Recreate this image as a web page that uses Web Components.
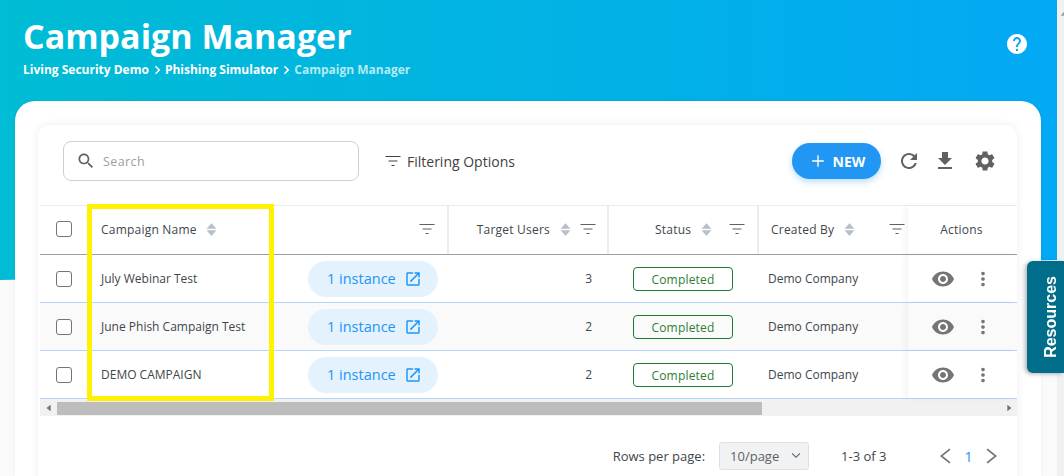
<!DOCTYPE html>
<html lang="en">
<head>
<meta charset="utf-8">
<title>Campaign Manager</title>
<style>
  html, body { margin: 0; height: 100%; overflow: hidden; background: #fafafa; }
  body { font-family: "Open Sans", "Noto Sans", sans-serif; color: #37474f; }
</style>
</head>
<body>
<campaign-page></campaign-page>
<script>
const ICONS = {
  search: '<path d="M15.5 14h-.79l-.28-.27C15.41 12.59 16 11.11 16 9.5 16 5.91 13.09 3 9.5 3S3 5.91 3 9.5 5.91 16 9.5 16c1.61 0 3.09-.59 4.23-1.57l.27.28v.79l5 4.99L20.49 19l-4.99-5zm-6 0C7.01 14 5 11.99 5 9.5S7.01 5 9.5 5 14 7.01 14 9.5 11.99 14 9.5 14z"/>',
  filter: '<path d="M2 5.2h20v1.5H2zM6 11.2h12v1.5H6zM10 17.2h4v1.5h-4z"/>',
  open: '<path d="M19 19H5V5h7V3H5c-1.11 0-2 .9-2 2v14c0 1.1.89 2 2 2h14c1.1 0 2-.9 2-2v-7h-2v7zM14 3v2h3.59l-9.83 9.83 1.41 1.41L19 6.41V10h2V3h-7z"/>',
  refresh: '<path d="M17.65 6.35C16.2 4.9 14.21 4 12 4c-4.42 0-7.99 3.58-7.99 8s3.57 8 7.99 8c3.73 0 6.84-2.55 7.73-6h-2.08c-.82 2.33-3.04 4-5.65 4-3.31 0-6-2.69-6-6s2.69-6 6-6c1.66 0 3.14.69 4.22 1.78L13 11h7V4l-2.35 2.35z"/>',
  download: '<path d="M19 9h-4V3H9v6H5l7 7 7-7zM5 18v2h14v-2H5z"/>',
  settings: '<path d="M19.14 12.94c.04-.3.06-.61.06-.94 0-.32-.02-.64-.07-.94l2.03-1.58c.18-.14.23-.41.12-.61l-1.92-3.32c-.12-.22-.37-.29-.59-.22l-2.39.96c-.5-.38-1.03-.7-1.62-.94l-.36-2.54c-.04-.24-.24-.41-.48-.41h-3.84c-.24 0-.43.17-.47.41l-.36 2.54c-.59.24-1.13.57-1.62.94l-2.39-.96c-.22-.08-.47 0-.59.22L2.74 8.87c-.12.21-.08.47.12.61l2.03 1.58c-.05.3-.09.63-.09.94s.02.64.07.94l-2.03 1.58c-.18.14-.23.41-.12.61l1.92 3.32c.12.22.37.29.59.22l2.39-.96c.5.38 1.03.7 1.62.94l.36 2.54c.05.24.24.41.48.41h3.84c.24 0 .44-.17.47-.41l.36-2.54c.59-.24 1.13-.56 1.62-.94l2.39.96c.22.08.47 0 .59-.22l1.92-3.32c.12-.22.07-.47-.12-.61l-2.01-1.58zM12 15.6c-1.98 0-3.6-1.62-3.6-3.6s1.62-3.6 3.6-3.6 3.6 1.62 3.6 3.6-1.62 3.6-3.6 3.6z"/>',
  help: '<path d="M12 2C6.48 2 2 6.48 2 12s4.48 10 10 10 10-4.48 10-10S17.52 2 12 2zm1 17h-2v-2h2v2zm2.07-7.75l-.9.92C13.45 12.9 13 13.5 13 15h-2v-.5c0-1.1.45-2.1 1.17-2.83l1.24-1.26c.37-.36.59-.86.59-1.41 0-1.1-.9-2-2-2s-2 .9-2 2H8c0-2.21 1.79-4 4-4s4 1.79 4 4c0 .88-.36 1.68-.93 2.25z"/>',
  eye: '<path d="M12 4.5C7 4.5 2.73 7.61 1 12c1.73 4.39 6 7.5 11 7.5s9.27-3.11 11-7.5c-1.73-4.39-6-7.5-11-7.5zM12 17c-2.76 0-5-2.24-5-5s2.24-5 5-5 5 2.24 5 5-2.24 5-5 5zm0-8c-1.66 0-3 1.34-3 3s1.34 3 3 3 3-1.34 3-3-1.34-3-3-3z"/>',
  more: '<path d="M12 8c1.1 0 2-.9 2-2s-.9-2-2-2-2 .9-2 2 .9 2 2 2zm0 2c-1.1 0-2 .9-2 2s.9 2 2 2 2-.9 2-2-.9-2-2-2zm0 6c-1.1 0-2 .9-2 2s.9 2 2 2 2-.9 2-2-.9-2-2-2z"/>',
  add: '<path d="M19 12.8h-6.2V19h-1.6v-6.2H5v-1.6h6.2V5h1.6v6.2H19z"/>',
  sort: '<path d="M12 3l7 8H5zM12 21l-7-8h14z"/>',
  crumb: '<path d="M7 4.2L9.6 1.6 20 12 9.6 22.4 7 19.8 14.8 12z"/>',
  prev: '<path d="M16.5 2L18 3.6 7.6 12 18 20.4 16.5 22 4 12z"/>',
  next: '<path d="M7.5 2L6 3.6 16.4 12 6 20.4 7.5 22 20 12z"/>',
  down: '<path d="M5.5 8.5l1.1-1.1L12 12.8l5.4-5.4 1.1 1.1L12 15z"/>',
  left: '<path d="M16 4v16L6 12z"/>',
  right: '<path d="M8 4v16l10-8z"/>',
  up: '<path d="M4 16h16L12 6z"/>'
};

class AppIcon extends HTMLElement {
  connectedCallback() {
    const size = this.getAttribute('size') || 24;
    const root = this.shadowRoot || this.attachShadow({ mode: 'open' });
    root.innerHTML = `
      <style>
        :host { display: inline-flex; flex: none; width: ${size}px; height: ${size}px; }
        svg { width: 100%; height: 100%; fill: currentColor; display: block; }
      </style>
      <svg viewBox="0 0 24 24" aria-hidden="true">${ICONS[this.getAttribute('name')] || ''}</svg>`;
  }
}
customElements.define('app-icon', AppIcon);

class PageHero extends HTMLElement {
  constructor() {
    super();
    this.attachShadow({ mode: 'open' });
    this.shadowRoot.innerHTML = `
      <style>
        :host {
          display: flex;
          justify-content: space-between;
          height: 280px;
          box-sizing: border-box;
          padding: 14px 28px 0 23px;
          color: #fff;
          background: linear-gradient(90deg, #00bcd4 0%, #03a9f4 100%);
          clip-path: polygon(0 0, 100% 0, 100% 260px, 0 280px);
        }
        h1 { margin: 0; font-size: 34px; line-height: 44px; font-weight: 700; }
        .crumbs { display: flex; align-items: center; margin-top: 3px; font-size: 12px; line-height: 18px; font-weight: 700; }
        .crumbs app-icon { margin: 0 3px; }
        .current { color: #b2ebf2; }
        .help { margin-top: 18px; }
      </style>
      <div>
        <h1>Campaign Manager</h1>
        <div class="crumbs">
          <span>Living Security Demo</span><app-icon name="crumb" size="10"></app-icon>
          <span>Phishing Simulator</span><app-icon name="crumb" size="10"></app-icon>
          <span class="current">Campaign Manager</span>
        </div>
      </div>
      <app-icon class="help" name="help" size="24"></app-icon>`;
  }
}
customElements.define('page-hero', PageHero);

class TableToolbar extends HTMLElement {
  constructor() {
    super();
    this.attachShadow({ mode: 'open' });
    this.shadowRoot.innerHTML = `
      <style>
        :host { display: flex; align-items: center; box-sizing: border-box; height: 80px; padding: 0 20px 8px 25px; color: #616161; }
        .search {
          box-sizing: border-box; width: 296px; height: 40px; display: flex; align-items: center; gap: 7px;
          padding-left: 12px; border: 1px solid #cfcfcf; border-radius: 8px; font-size: 12.5px; color: #9e9e9e;
          letter-spacing: .4px;
        }
        .search app-icon { color: #616161; }
        .filter { display: flex; align-items: center; gap: 5px; margin-left: 25px; font-size: 14px; color: #424242; }
        .new {
          box-sizing: border-box; width: 89px; height: 36px; margin-left: auto; display: flex; align-items: center; justify-content: center; gap: 5px;
          border-radius: 18px; background: #2196f3; color: #fff; font-size: 14px; font-weight: 700;
          box-shadow: 0 3px 6px rgba(33,150,243,.3);
        }
        .refresh { margin-left: 16px; }
        .download { margin-left: 12px; }
        .settings { margin-left: 16px; }
      </style>
      <div class="search"><app-icon name="search" size="20"></app-icon><span>Search</span></div>
      <div class="filter"><app-icon name="filter" size="18"></app-icon><span>Filtering Options</span></div>
      <div class="new"><app-icon name="add" size="20"></app-icon><span>NEW</span></div>
      <app-icon class="refresh" name="refresh" size="24"></app-icon>
      <app-icon class="download" name="download" size="24"></app-icon>
      <app-icon class="settings" name="settings" size="24"></app-icon>`;
  }
}
customElements.define('table-toolbar', TableToolbar);

const ROWS = [
  { name: 'July Webinar Test', users: 3 },
  { name: 'June Phish Campaign Test', users: 2 },
  { name: 'DEMO CAMPAIGN', users: 2 }
];

class CampaignTable extends HTMLElement {
  constructor() {
    super();
    this.attachShadow({ mode: 'open' });
    const body = ROWS.map((r) => `
      <div class="row">
        <div class="cell check"><span class="box"></span></div>
        <div class="cell name"><span>${r.name}</span>
          <span class="pill">1 instance<app-icon name="open" size="18"></app-icon></span></div>
        <div class="cell users">${r.users}</div>
        <div class="cell status"><span class="badge">Completed</span></div>
        <div class="cell by">Demo Company</div>
        <div class="cell actions"><app-icon class="eye" name="eye" size="24"></app-icon><app-icon name="more" size="22"></app-icon></div>
      </div>`).join('');
    this.shadowRoot.innerHTML = `
      <style>
        :host { display: block; position: relative; margin-left: 2px; font-size: 12px; color: #3d464d; }
        .row { display: grid; grid-template-columns: 48px 361px 160px 150px 149px 109px; height: 48px; box-sizing: border-box; border-bottom: 1px solid #b5d5fb; background: #fff; }
        .row:nth-child(even) { background: #fafafa; }
        .row.head { background: #fff; border-top: 1px solid #e8ecf3; border-bottom: 1px solid #9e9e9e; height: 50px; }
        .cell { display: flex; align-items: center; box-sizing: border-box; min-width: 0; }
        .head .cell { font-weight: 500; letter-spacing: .22px; border-right: 2px solid #e8ecf3; padding-bottom: 2px; }
        .head .cell:first-child { border-right: 0; }
        .check { justify-content: center; }
        .box { width: 16px; height: 16px; box-sizing: border-box; border: 1.5px solid #757575; border-radius: 3px; background: #fff; }
        .name { padding: 0 11px 0 13px; justify-content: space-between; }
        .head .name { padding-right: 11px; }
        .sort { color: #b8bfcb; margin-left: 6.5px; }
        .funnel { color: #616161; }
        .head .name .funnel, .head .by .funnel { margin-left: auto; }
        .pill { display: flex; align-items: center; box-sizing: border-box; padding-left: 19px; gap: 8px; width: 130px; height: 36px; border-radius: 18px; background: #e3f2fd; color: #2196f3; font-size: 14.5px; }
        .users { justify-content: flex-end; padding-right: 17px; }
        .head .users { padding-right: 10px; }
        .head .users .funnel { margin-left: 5.5px; }
        .status { padding-left: 24px; }
        .head .status { padding-left: 46px; }
        .head .status .funnel { margin-left: 13.5px; }
        .badge { box-sizing: border-box; width: 100px; height: 24px; display: flex; align-items: center; justify-content: center; padding-top: 2px; border: 1px solid #1b7a2f; border-radius: 4px; color: #2e7d32; letter-spacing: .2px; }
        .by { padding-left: 9px; }
        .head .by { padding: 0 2px 2px 12px; border-right: 0; }
        .actions { justify-content: flex-start; padding-left: 23px; gap: 17px; background: inherit; box-shadow: -4px 0 6px rgba(0,0,0,.04); position: relative; color: #757575; }
        .head .actions { justify-content: center; padding: 0 2px 2px 0; border-right: 0; background: #fff; color: inherit; }
        .bar { height: 17px; display: flex; align-items: center; background: #f1f1f1; color: #757575; padding: 0 3px 0 4px; }
        .bar .thumb { width: 705px; height: 13px; background: #bdbdbd; margin: 1px 0 0 3px; }
        .bar .end { margin-left: auto; }
        .mark { position: absolute; left: 47px; top: -1px; width: 187px; height: 197px; box-sizing: border-box; border: 5px solid #fff200; pointer-events: none; }
      </style>
      <div class="row head">
        <div class="cell check"><span class="box"></span></div>
        <div class="cell name">Campaign Name<app-icon class="sort" name="sort" size="17"></app-icon><app-icon class="funnel" name="filter" size="18"></app-icon></div>
        <div class="cell users">Target Users<app-icon class="sort" name="sort" size="17"></app-icon><app-icon class="funnel" name="filter" size="18"></app-icon></div>
        <div class="cell status">Status<app-icon class="sort" name="sort" size="17"></app-icon><app-icon class="funnel" name="filter" size="18"></app-icon></div>
        <div class="cell by">Created By<app-icon class="sort" name="sort" size="17"></app-icon><app-icon class="funnel" name="filter" size="18"></app-icon></div>
        <div class="cell actions">Actions</div>
      </div>
      ${body}
      <div class="bar"><app-icon name="left" size="10"></app-icon><div class="thumb"></div><app-icon class="end" name="right" size="10"></app-icon></div>
      <div class="mark"></div>`;
  }
}
customElements.define('campaign-table', CampaignTable);

class TablePager extends HTMLElement {
  constructor() {
    super();
    this.attachShadow({ mode: 'open' });
    this.shadowRoot.innerHTML = `
      <style>
        :host { display: flex; align-items: center; height: 80px; padding-right: 17.5px; box-sizing: border-box; justify-content: flex-end; font-size: 13px; color: #3d464d; }
        .size { box-sizing: border-box; width: 90px; height: 28px; margin: 0 32px 0 14px; padding: 0 4px 0 10px; display: flex; align-items: center; justify-content: space-between; background: #f1f2f4; border: 1px solid #dfe1e6; border-radius: 3px; color: #616161; }
        .range { margin-right: 51px; }
        .pages { display: flex; align-items: center; gap: 9px; color: #757575; }
        .now { color: #2196f3; font-size: 14px; }
      </style>
      <span>Rows per page:</span>
      <div class="size"><span>10/page</span><app-icon name="down" size="16"></app-icon></div>
      <span class="range">1-3 of 3</span>
      <div class="pages"><app-icon name="prev" size="18"></app-icon><span class="now">1</span><app-icon name="next" size="18"></app-icon></div>`;
  }
}
customElements.define('table-pager', TablePager);

class ResourcesTab extends HTMLElement {
  constructor() {
    super();
    this.attachShadow({ mode: 'open' });
    this.shadowRoot.innerHTML = `
      <style>
        :host {
          position: fixed; right: 0; top: 261px; width: 37px; height: 112px; box-sizing: border-box; padding-left: 11px; display: flex; align-items: center; justify-content: center;
          background: #006e8a; color: #fff; border-radius: 6px 0 0 6px; box-shadow: -2px 1px 4px rgba(0,0,0,.3);
          font: 700 16px "Liberation Sans", Arial, sans-serif;
        }
        span { writing-mode: vertical-rl; transform: rotate(180deg); }
      </style>
      <span>Resources</span>`;
  }
}
customElements.define('resources-tab', ResourcesTab);

class CampaignPage extends HTMLElement {
  constructor() {
    super();
    this.attachShadow({ mode: 'open' });
    this.shadowRoot.innerHTML = `
      <style>
        :host { display: flex; height: 476px; overflow: hidden; background: #fafafa; }
        main { flex: 1; min-width: 0; }
        .panel { margin: -179px 16px 0 15px; padding: 24px 24px 0 23px; height: 375px; box-sizing: border-box; background: #fff; border-radius: 20px 20px 0 0; position: relative; box-shadow: 0 0 4px rgba(0,0,0,.06); }
        .card { border-radius: 12px 12px 0 0; background: #fff; box-shadow: 0 0 10px rgba(0,0,0,.07); height: 400px; }
        .rail { width: 7px; background: #f1f1f1; color: #9e9e9e; padding: 2px 0 0 2px; box-sizing: border-box; }
      </style>
      <main>
        <page-hero></page-hero>
        <section class="panel">
          <div class="card">
            <table-toolbar></table-toolbar>
            <campaign-table></campaign-table>
            <table-pager></table-pager>
          </div>
        </section>
      </main>
      <div class="rail"><app-icon name="up" size="10"></app-icon></div>
      <resources-tab></resources-tab>`;
  }
}
customElements.define('campaign-page', CampaignPage);
</script>
</body>
</html>
